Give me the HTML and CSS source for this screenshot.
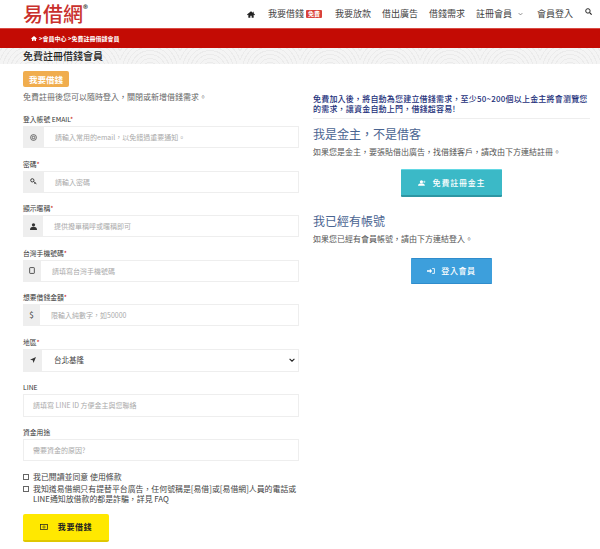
FILE: index.html
```html
<!DOCTYPE html>
<html lang="zh-Hant">
<head>
<meta charset="utf-8">
<title>免費註冊借錢會員</title>
<link rel="stylesheet" href="styles.css">
</head>
<body>
<header class="topbar">
  <a class="logo">易借網<span class="logo-reg">®</span></a>
  <nav class="nav">
    <a class="nav-home"><svg viewBox="0 0 12 10" width="8" height="7"><path d="M6 0 0 5l1 1 1-.8V10h3V7h2v3h3V5.200l1 .8 1-1-2-1.700V1H9v1.500z" fill="#222"/></svg></a>
    <a class="nav-item nav-first">我要借錢<span class="free">免費</span></a>
    <a class="nav-item">我要放款</a>
    <a class="nav-item">借出廣告</a>
    <a class="nav-item">借錢需求</a>
    <a class="nav-item nav-drop">註冊會員<svg viewBox="0 0 8 5" width="5" height="4"><path d="M1 1l3 3 3-3" fill="none" stroke="#555"/></svg></a>
    <a class="nav-item">會員登入</a>
    <a class="nav-search"><svg viewBox="0 0 12 12" width="7" height="7"><circle cx="5" cy="5" r="3.800" fill="none" stroke="#222" stroke-width="1.700"/><path d="M8 8l3.400 3.400" stroke="#222" stroke-width="2"/></svg></a>
  </nav>
</header>
<div class="crumbbar">
  <svg viewBox="0 0 12 10" width="6" height="5"><path d="M6 0 0 5l1 1 1-.8V10h3V7h2v3h3V5.200l1 .8 1-1z" fill="#fff"/></svg>
  <span>&gt;會員中心 &gt;免費註冊借錢會員</span>
</div>
<div class="titlebar"><h1>免費註冊借錢會員</h1></div>
<main class="columns">
  <section class="left">
    <div class="badge">我要借錢</div>
    <p class="intro">免費註冊後您可以隨時登入，關閉或新增借錢需求。</p>
    <form class="form">
      <div class="field">
        <label>登入帳號 EMAIL<i>*</i></label>
        <div class="group"><span class="addon a21"><svg viewBox="0 0 12 12" width="7" height="7"><circle cx="6" cy="6" r="5" fill="none" stroke="#444" stroke-width="1.300"/><circle cx="6" cy="6" r="2.200" fill="none" stroke="#444" stroke-width="1.300"/></svg></span><span class="ph">請輸入常用的email，以免錯過重要通知。</span></div>
      </div>
      <div class="field">
        <label>密碼<i>*</i></label>
        <div class="group"><span class="addon a21"><svg viewBox="0 0 12 12" width="7" height="7"><circle cx="4" cy="4" r="2.800" fill="none" stroke="#333" stroke-width="1.600"/><path d="M6 6l5 4M9 8l-1 2" stroke="#333" stroke-width="1.600"/></svg></span><span class="ph">請輸入密碼</span></div>
      </div>
      <div class="field">
        <label>顯示暱稱<i>*</i></label>
        <div class="group"><span class="addon a20"><svg viewBox="0 0 12 12" width="7" height="7"><circle cx="6" cy="3.200" r="2.800" fill="#333"/><path d="M0 12c0-4 2-5.500 6-5.500s6 1.500 6 5.500z" fill="#333"/></svg></span><span class="ph">提供撥單稱呼或暱稱即可</span></div>
      </div>
      <div class="field">
        <label>台灣手機號碼<i>*</i></label>
        <div class="group"><span class="addon a18"><svg viewBox="0 0 10 12" width="6" height="7"><rect x="1" y="1" width="8" height="10" rx="1" fill="none" stroke="#333" stroke-width="1.400"/></svg></span><span class="ph">請填寫台灣手機號碼</span></div>
      </div>
      <div class="field">
        <label>想要借錢金額<i>*</i></label>
        <div class="group"><span class="addon a17 dollar">$</span><span class="ph">限輸入純數字，如50000</span></div>
      </div>
      <div class="field">
        <label>地區<i>*</i></label>
        <div class="group tall"><span class="addon a19"><svg viewBox="0 0 12 12" width="6" height="6"><path d="M12 0 0 5.500l5.500 1L7 12z" fill="#333"/></svg></span><span class="sel">台北基隆</span><svg class="caret" viewBox="0 0 10 6" width="6" height="4"><path d="M1 1l4 4 4-4" fill="none" stroke="#222" stroke-width="1.800"/></svg></div>
      </div>
      <div class="field line">
        <label>LINE</label>
        <div class="group tall"><span class="ph plain">請填寫 LINE ID 方便金主與您聯絡</span></div>
      </div>
      <div class="field last">
        <label>資金用途</label>
        <div class="group"><span class="ph plain">需要資金的原因?</span></div>
      </div>
      <div class="checks">
        <div class="check"><span class="box"></span><span>我已閱讀並同意 使用條款</span></div>
        <div class="check"><span class="box"></span><span>我知道易借網只有提替平台廣告，任何號稱是[易借]或[易借網]人員的電話或<br>LINE通知放借款的都是詐騙，詳見 FAQ</span></div>
      </div>
      <button type="button" class="submit"><svg viewBox="0 0 14 10" width="8" height="6"><rect x=".7" y=".7" width="12.600" height="8.600" fill="none" stroke="#222" stroke-width="1.300"/><circle cx="7" cy="5" r="2" fill="none" stroke="#222"/></svg><span>我要借錢</span></button>
    </form>
  </section>
  <aside class="right">
    <p class="notice">免費加入後，將自動為您建立借錢需求，至少50~200個以上金主將會瀏覽您的需求，讓資金自動上門，借錢超容易!</p>
    <h2 class="first">我是金主，不是借客</h2>
    <p class="desc">如果您是金主，要張貼借出廣告，找借錢客戶，請改由下方連結註冊。</p>
    <div class="cta"><a class="btn teal"><svg viewBox="0 0 14 10" width="8" height="6"><circle cx="6" cy="3" r="2.800" fill="#fff"/><path d="M0 10c0-3 2-4 6-4s6 1 6 4z" fill="#fff"/><path d="M11 1v4M9 3h4" stroke="#fff"/></svg><span>免費註冊金主</span></a></div>
    <h2 class="second">我已經有帳號</h2>
    <p class="desc">如果您已經有會員帳號，請由下方連結登入。</p>
    <div class="cta login"><a class="btn blue"><svg viewBox="0 0 14 10" width="8" height="6"><path d="M0 3.500h5V1l4 4-4 4V6.500H0z" fill="#fff"/><path d="M9 .8h4v8.400H9" fill="none" stroke="#fff" stroke-width="1.500"/></svg><span>登入會員</span></a></div>
  </aside>
</main>
</body>
</html>
```
FILE: styles.css
```css
* { box-sizing: border-box; }
html, body { margin: 0; padding: 0; }
body {
  width: 600px;
  height: 549px;
  overflow: hidden;
  background: #fff;
  color: #444;
  font-family: "Noto Sans CJK TC", "Noto Sans", sans-serif;
  font-size: 8px;
  line-height: 10px;
}
.topbar {
  height: 28px;
  display: flex;
  align-items: center;
  justify-content: space-between;
  padding: 0 0 0 23px;
}
.logo {
  color: #c9302c;
  font-size: 20px;
  font-weight: 500;
  line-height: 24px;
  display: flex;
  margin-top: -1px;
}
.logo-reg {
  font-size: 10px;
  line-height: 10px;
  color: #333;
  margin-top: 2px;
}
.nav {
  display: flex;
  align-items: center;
  font-size: 9px;
  color: #444;
  padding-right: 8px;
}
.nav-home { display: flex; margin: 0 13px 0 17px; }
.nav-item { display: flex; align-items: center; margin-right: 11px; white-space: nowrap; }
.free {
  background: #d9423a;
  color: #fff;
  font-size: 6px;
  font-weight: 700;
  line-height: 8px;
  padding: 0 2px;
  margin-left: 2px;
  border-radius: 1px;
}
.nav-first { margin-right: 13px; }
.nav-drop svg { margin-left: 6px; }
.nav-drop { margin-right: 14px; }
.nav-search { display: flex; margin: -6px 0 0 1px; }
.crumbbar {
  height: 20px;
  background: #c30b04;
  border-top: 1px solid #d94a44;
  color: #fff;
  font-size: 6px;
  font-weight: 700;
  display: flex;
  align-items: center;
  gap: 2px;
  padding-left: 31px;
}
.titlebar {
  height: 16px;
  background-color: #f4f4f4;
  background-image: repeating-radial-gradient(circle at 30px 22px, transparent 0 3px, #ebebeb 3px 4px);
  background-size: 60px 16px;
  padding-left: 23px;
}
.titlebar h1 {
  margin: 0;
  font-size: 10px;
  line-height: 16px;
  font-weight: 500;
  color: #222;
}
.columns {
  display: flex;
  padding: 7px 0 0 23px;
  gap: 14px;
}
.left { width: 276px; flex: none; }
.right { width: 277px; flex: none; padding-top: 23px; }
.badge {
  width: 46px;
  height: 16px;
  background: #f0ad4e;
  border-radius: 2px;
  color: #fff;
  font-size: 8.500px;
  font-weight: 700;
  line-height: 16px;
  text-align: center;
}
.intro { margin: 4px 0 0; color: #666; line-height: 12px; }
.form { margin-top: 11px; }
.field { height: 44.500px; }
.field label {
  display: block;
  height: 12px;
  font-size: 6.800px;
  line-height: 10px;
  color: #333;
}
.field label i { color: #c30b04; font-style: normal; }
.field.line { height: 45px; margin-top: .5px; }
.field.last { height: 34px; }
.group {
  height: 22px;
  display: flex;
  align-items: center;
  border: 1px solid #eee;
  background: #fff;
  width: 276px;
  position: relative;
}
.group.tall { height: 23px; }
.addon {
  align-self: stretch;
  background: #eee;
  margin: -1px 0 -1px -1px;
  display: flex;
  align-items: center;
  justify-content: center;
  flex: none;
}
.a21 { width: 21px; }
.a20 { width: 20px; }
.a19 { width: 19px; }
.a18 { width: 18px; }
.a17 { width: 17px; }
.dollar { font-size: 8px; color: #333; }
.ph { color: #aaa; font-size: 7px; margin-left: 11px; white-space: nowrap; }
.ph.plain { margin-left: 9px; }
.sel { color: #444; font-size: 7.500px; margin-left: 12px; }
.caret { position: absolute; right: 3px; top: 8px; }
.checks { margin-top: 11px; }
.check {
  display: flex;
  gap: 4px;
  color: #444;
  font-size: 7.900px;
  line-height: 10px;
  margin-bottom: 2px;
  white-space: nowrap;
}
.check .box {
  width: 6px;
  height: 6px;
  border: 1px solid #666;
  flex: none;
  margin: 2px 0 0 0;
}
.submit {
  margin-top: 10px;
  width: 86px;
  height: 28px;
  background: #ffe800;
  border: 0;
  border-bottom: 2px solid #e0c800;
  border-radius: 2px;
  color: #222;
  font-family: inherit;
  font-size: 8px;
  font-weight: 700;
  letter-spacing: .6px;
  display: flex;
  align-items: center;
  justify-content: center;
  gap: 10px;
}
.notice {
  margin: 0;
  color: #1c2f7a;
  font-size: 8px;
  font-weight: 500;
  line-height: 10px;
  letter-spacing: .2px;
  padding-bottom: 4px;
  border-bottom: 1px solid #eee;
}
h2 {
  margin: 0;
  color: #4a6491;
  font-size: 12px;
  font-weight: 400;
  line-height: 16px;
}
h2.first { margin-top: 7px; }
h2.second { margin-top: 16px; }
.desc { margin: 4px 0 0; color: #555; line-height: 12px; }
.cta { display: flex; justify-content: center; margin-top: 11px; }
.cta.login { margin-top: 13px; }
.btn {
  color: #fff;
  font-size: 8px;
  font-weight: 500;
  display: flex;
  align-items: center;
  justify-content: center;
  border-radius: 1px;
}
.btn.teal {
  width: 101px;
  height: 28px;
  background: #3bb9c7;
  border-top: 1px solid #62d8e4;
  border-bottom: 2px solid #2d96a3;
  letter-spacing: .8px;
  gap: 7px;
}
.btn.blue {
  width: 81px;
  height: 26px;
  background: #3d9fdc;
  border-top: 1px solid #2f8ccc;
  border-bottom: 1px solid #2f8ccc;
  letter-spacing: .6px;
  gap: 6px;
}
```
